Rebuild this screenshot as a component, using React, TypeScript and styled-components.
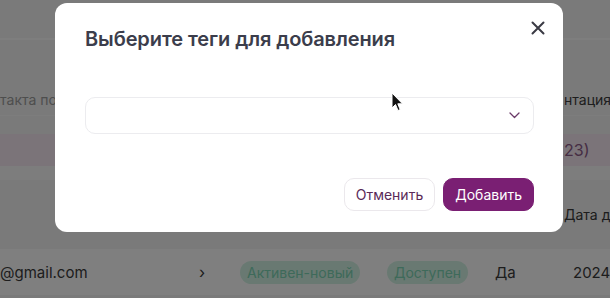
import React from "react";
import styled, { createGlobalStyle } from "styled-components";

const Global = createGlobalStyle`
  html, body { margin: 0; padding: 0; }
  body {
    width: 610px;
    height: 298px;
    overflow: hidden;
    font-family: Inter, "Noto Sans", "Liberation Sans", sans-serif;
    background: #f4f4f4;
  }
  #root { width: 610px; height: 298px; }
`;

const Page = styled.div`
  position: relative;
  width: 610px;
  height: 298px;
  overflow: hidden;
  display: flex;
  flex-direction: column;
  background: #f4f4f4;
  color: #3e3e3e;
  font-size: 14px;
`;

const TopBar = styled.div`
  height: 38px;
  flex: none;
  border-bottom: 2px solid #fcfcfc;
`;

const Band = styled.div<{ $h: number; $bg?: string; $mt?: number; $border?: boolean }>`
  flex: none;
  height: ${(p) => p.$h}px;
  margin-top: ${(p) => p.$mt ?? 0}px;
  background: ${(p) => p.$bg ?? "transparent"};
  border-bottom: ${(p) => (p.$border ? "1px solid #fafafa" : "none")};
  display: flex;
  align-items: center;
  justify-content: space-between;
  white-space: nowrap;
  overflow: hidden;
`;

const FaintText = styled.span<{ $color?: string; $size?: number }>`
  color: ${(p) => p.$color ?? "#9a9a9a"};
  font-size: ${(p) => p.$size ?? 14}px;
`;

const RightText = styled(FaintText)`
  width: 46px;
`;

const DataRow = styled.div`
  flex: none;
  margin-top: 17px;
  height: 46px;
  background: #ffffff;
  display: grid;
  grid-template-columns: 199px 41px 147px 108px 78px 1fr;
  align-items: center;
  white-space: nowrap;
  font-size: 15px;
  color: #3a3a3a;
  overflow: hidden;
`;

const Badge = styled.span`
  justify-self: start;
  height: 23px;
  padding: 0 7px;
  border-radius: 12px;
  background: #d2f3e4;
  color: #7cd4b4;
  font-size: 14px;
  display: inline-flex;
  align-items: center;
`;

const Chevron = styled.span`
  font-size: 16px;
  color: #3a3a3a;
`;

const Overlay = styled.div`
  position: absolute;
  inset: 0;
  background: rgba(0, 0, 0, 0.5);
`;

const Modal = styled.div`
  position: absolute;
  left: 55px;
  top: 3px;
  width: 508px;
  height: 229px;
  box-sizing: border-box;
  background: #ffffff;
  border-radius: 12px;
  padding: 22px 29px 21px 30px;
  display: flex;
  flex-direction: column;
`;

const Title = styled.h2`
  margin: 0;
  font-size: 20px;
  line-height: 28px;
  font-weight: 600;
  color: #3b3d4b;
  letter-spacing: -0.1px;
`;

const CloseButton = styled.button`
  position: absolute;
  top: 14px;
  right: 14px;
  width: 22px;
  height: 22px;
  padding: 0;
  border: none;
  background: transparent;
  display: flex;
  align-items: center;
  justify-content: center;
  cursor: pointer;
`;

const Select = styled.div`
  margin-top: 44px;
  height: 37px;
  box-sizing: border-box;
  border: 1px solid #ececef;
  border-radius: 10px;
  display: flex;
  align-items: center;
  justify-content: flex-end;
  padding-right: 13px;
`;

const Actions = styled.div`
  margin-top: auto;
  display: flex;
  justify-content: flex-end;
  gap: 8px;
`;

const Button = styled.button<{ $primary?: boolean }>`
  height: 33px;
  padding: 0 11px;
  border-radius: 10px;
  font-family: inherit;
  font-size: 14px;
  font-weight: 400;
  box-sizing: border-box;
  border: 1px solid ${(p) => (p.$primary ? "#7a1f73" : "#ebe8ec")};
  background: ${(p) => (p.$primary ? "#7a1f73" : "#ffffff")};
  color: ${(p) => (p.$primary ? "#ffffff" : "#5a2a58")};
  cursor: pointer;
`;

const Cursor = styled.svg`
  position: absolute;
  left: 391px;
  top: 92px;
`;

export default function App() {
  return (
    <>
      <Global />
      <Page>
        <TopBar />
        <Band $h={32} $mt={43} $border>
          <FaintText $color="#9c9c9c" $size={14}>такта по</FaintText>
          <RightText $color="#3c3c3c" $size={14}>нтация</RightText>
        </Band>
        <Band $h={32} $mt={18} $bg="#f6e9f2">
          <span />
          <RightText $color="#8c5a88" $size={16}>23)</RightText>
        </Band>
        <Band $h={14} $bg="#fbfbfb" />
        <Band $h={36} $mt={16}>
          <span />
          <RightText $color="#3a3a3a" $size={14}>Дата д</RightText>
        </Band>
        <DataRow>
          <span>@gmail.com</span>
          <Chevron>›</Chevron>
          <Badge>Активен-новый</Badge>
          <Badge>Доступен</Badge>
          <span>Да</span>
          <span>2024</span>
        </DataRow>
        <Overlay>
          <Modal>
            <Title>Выберите теги для добавления</Title>
            <CloseButton aria-label="Закрыть">
              <svg width="14" height="14" viewBox="0 0 14 14">
                <path d="M1.5 1.5 L12.5 12.5 M12.5 1.5 L1.5 12.5" stroke="#3a3a44" strokeWidth="2" strokeLinecap="round" />
              </svg>
            </CloseButton>
            <Select>
              <svg width="11" height="7" viewBox="0 0 11 7">
                <path d="M1 1 L5.5 5.5 L10 1" fill="none" stroke="#6b3a68" strokeWidth="1.3" strokeLinecap="round" strokeLinejoin="round" />
              </svg>
            </Select>
            <Actions>
              <Button>Отменить</Button>
              <Button $primary>Добавить</Button>
            </Actions>
          </Modal>
          <Cursor width="13" height="20" viewBox="0 0 13 20">
            <path d="M1 1 L1 16 L4.5 12.5 L7 18.5 L9.2 17.6 L6.8 11.8 L11.5 11.8 Z" fill="#111" stroke="#fff" strokeWidth="1" strokeLinejoin="round" />
          </Cursor>
        </Overlay>
      </Page>
    </>
  );
}
